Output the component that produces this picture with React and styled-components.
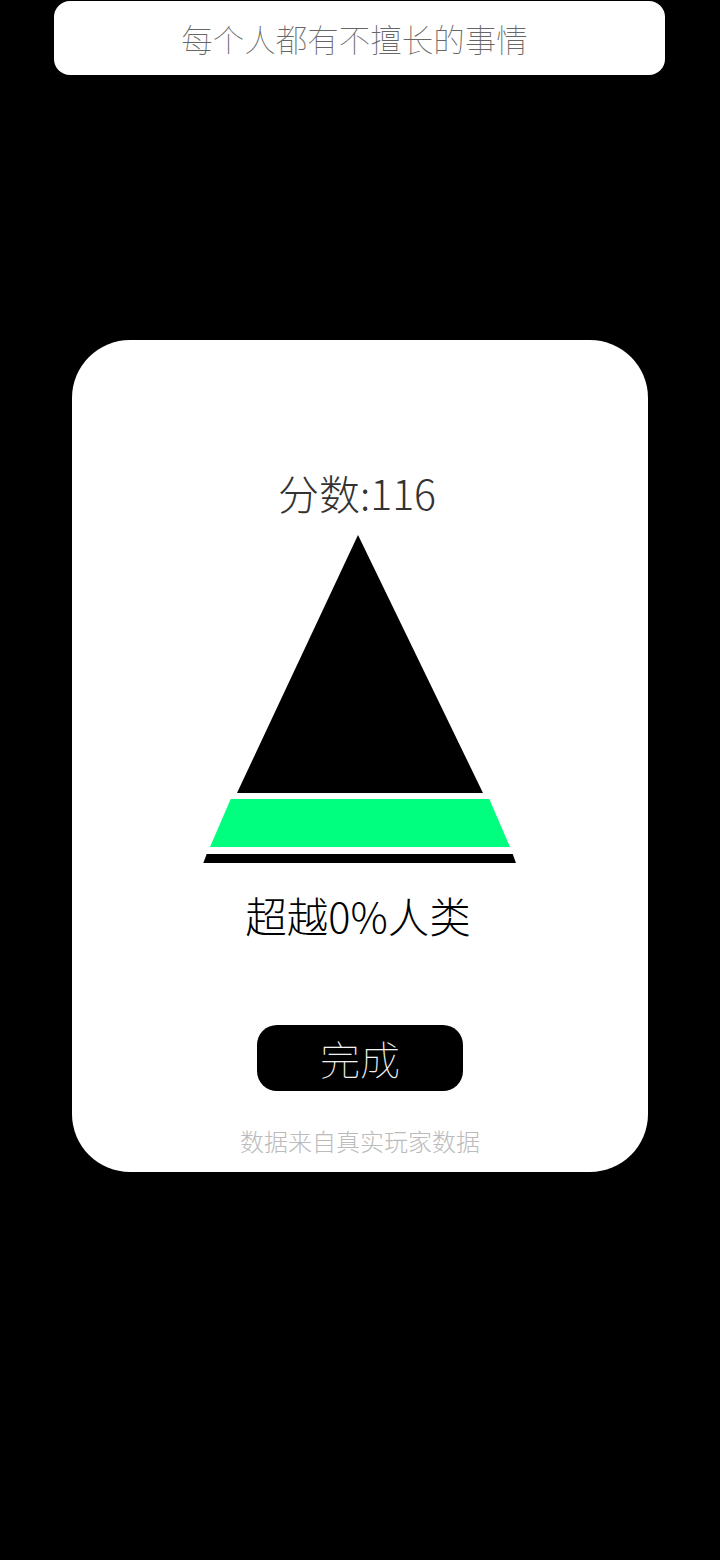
import React from "react";
import styled, { createGlobalStyle } from "styled-components";

const GlobalStyle = createGlobalStyle`
  html, body {
    margin: 0;
    padding: 0;
    background: #000;
    min-height: 100%;
  }
  body {
    font-family: "Noto Sans CJK SC", "Noto Sans", sans-serif;
  }
`;

const Page = styled.div`
  display: flex;
  flex-direction: column;
  align-items: center;
  width: 720px;
  min-height: 1560px;
  background: #000;
`;

const Banner = styled.div`
  margin-top: 1px;
  width: 611px;
  height: 74px;
  margin-left: -1px;
  padding-right: 10px;
  box-sizing: border-box;
  background: #fff;
  border-radius: 16px;
  display: flex;
  align-items: center;
  justify-content: center;
  font-size: 31.5px;
  font-weight: 100;
  color: #666;
`;

const Card = styled.div`
  margin-top: 265px;
  width: 576px;
  background: #fff;
  border-radius: 58px;
  display: flex;
  flex-direction: column;
  align-items: center;
  padding: 126px 0 16px;
  box-sizing: border-box;
`;

const Score = styled.div`
  font-size: 41px;
  line-height: 52px;
  font-weight: 300;
  color: #333;
  margin-left: -6px;
`;

const Pyramid = styled.svg`
  display: block;
  margin-top: 15px;
`;

const Rank = styled.div`
  margin-top: 25px;
  font-size: 41.5px;
  line-height: 50px;
  font-weight: 300;
  color: #000;
  margin-left: -4px;
`;

const DoneButton = styled.button`
  margin-top: 85px;
  width: 206px;
  height: 66px;
  border: none;
  border-radius: 20px;
  background: #000;
  color: #f2f2f2;
  font-family: inherit;
  font-size: 40px;
  font-weight: 100;
  display: flex;
  align-items: center;
  justify-content: center;
  cursor: pointer;
`;

const Footnote = styled.div`
  margin-top: 35px;
  font-size: 24px;
  line-height: 30px;
  font-weight: 300;
  color: #bbb;
`;

export default function App() {
  return (
    <Page>
      <GlobalStyle />
      <Banner>每个人都有不擅长的事情</Banner>
      <Card>
        <Score>分数:116</Score>
        <Pyramid width="320" height="332" viewBox="0 0 320 332">
          <polygon points="158,2 37,260 283,260" fill="#000" />
          <polygon points="30.7,266 289.3,266 310,314 10,314" fill="#00ff7f" />
          <polygon points="6.7,321 312.7,321 316,330 3.3,330" fill="#000" />
        </Pyramid>
        <Rank>超越0%人类</Rank>
        <DoneButton>完成</DoneButton>
        <Footnote>数据来自真实玩家数据</Footnote>
      </Card>
    </Page>
  );
}
